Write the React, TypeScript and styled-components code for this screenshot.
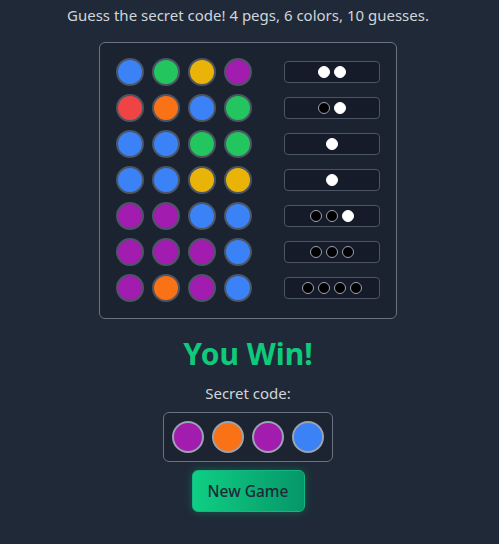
import React from "react";
import styled, { createGlobalStyle } from "styled-components";

const Global = createGlobalStyle`
  html, body { margin: 0; padding: 0; background: #1f2937; }
  body { font-family: "Segoe UI", "Noto Sans", "Open Sans", sans-serif; color: #d1d5db; }
  #root { min-height: 544px; }
`;

const Page = styled.div`
  display: flex;
  flex-direction: column;
  align-items: center;
  padding-right: 3px;
  background: #1f2937;
  min-height: 544px;
`;

const Intro = styled.p`
  margin: 4px 0 16px;
  font-size: 15px;
  line-height: 22px;
  color: #d1d5db;
`;

const Board = styled.div`
  display: flex;
  flex-direction: column;
  gap: 8px;
  padding: 15px 16px 16px;
  border: 1px solid #6b7280;
  border-radius: 6px;
  background: #1b2230;
`;

const Row = styled.div`
  display: flex;
  align-items: center;
  gap: 32px;
`;

const Pegs = styled.div<{ $gap: number }>`
  display: flex;
  gap: ${(p) => p.$gap}px;
`;

const Peg = styled.div<{ $color: string; $size: number; $ring: string }>`
  box-sizing: border-box;
  width: ${(p) => p.$size}px;
  height: ${(p) => p.$size}px;
  border-radius: 50%;
  background: ${(p) => p.$color};
  border: 2px solid ${(p) => p.$ring};
`;

const Feedback = styled.div`
  box-sizing: border-box;
  width: 96px;
  height: 22px;
  display: flex;
  align-items: center;
  justify-content: center;
  gap: 4px;
  border: 1px solid #4b5563;
  border-radius: 4px;
  background: #151b29;
`;

const Pin = styled.div<{ $kind: "b" | "w" }>`
  box-sizing: border-box;
  width: 12px;
  height: 12px;
  border-radius: 50%;
  background: ${(p) => (p.$kind === "w" ? "#ffffff" : "#000000")};
  border: 1px solid ${(p) => (p.$kind === "w" ? "#ffffff" : "#9ca3af")};
`;

const WinTitle = styled.h2`
  margin: 17px 0 0;
  font-size: 30px;
  line-height: 36px;
  font-weight: 700;
  color: #0fc97c;
`;

const SecretLabel = styled.p`
  margin: 10px 0 8px;
  font-size: 15px;
  line-height: 22px;
  color: #d1d5db;
`;

const SecretBox = styled.div`
  padding: 8px;
  border: 1px solid #6b7280;
  border-radius: 6px;
  background: #1c2331;
`;

const NewGame = styled.button`
  margin-top: 8px;
  width: 113px;
  height: 42px;
  border: 1px solid #10b981;
  border-radius: 6px;
  background: linear-gradient(90deg, #0fcf84, #069668);
  color: #1f2937;
  font-family: inherit;
  font-size: 15.5px;
  font-weight: 500;
  box-shadow: 0 0 10px rgba(16, 185, 129, 0.35);
  cursor: pointer;
`;

const C: Record<string, string> = {
  B: "#3b82f6",
  G: "#22c55e",
  Y: "#eab308",
  P: "#a21caf",
  R: "#ef4444",
  O: "#f97316",
};

const guesses: { code: string; fb: string }[] = [
  { code: "BGYP", fb: "ww" },
  { code: "ROBG", fb: "bw" },
  { code: "BBGG", fb: "w" },
  { code: "BBYY", fb: "w" },
  { code: "PPBB", fb: "bbw" },
  { code: "PPPB", fb: "bbb" },
  { code: "POPB", fb: "bbbb" },
];

export default function App() {
  return (
    <Page>
      <Global />
      <Intro>Guess the secret code! 4 pegs, 6 colors, 10 guesses.</Intro>
      <Board>
        {guesses.map((g, i) => (
          <Row key={i}>
            <Pegs $gap={8}>
              {g.code.split("").map((c, j) => (
                <Peg key={j} $color={C[c]} $size={28} $ring="#4b5563" />
              ))}
            </Pegs>
            <Feedback>
              {g.fb.split("").map((k, j) => (
                <Pin key={j} $kind={k as "b" | "w"} />
              ))}
            </Feedback>
          </Row>
        ))}
      </Board>
      <WinTitle>You Win!</WinTitle>
      <SecretLabel>Secret code:</SecretLabel>
      <SecretBox>
        <Pegs $gap={8}>
          {"POPB".split("").map((c, j) => (
            <Peg key={j} $color={C[c]} $size={32} $ring="#9ca3af" />
          ))}
        </Pegs>
      </SecretBox>
      <NewGame>New Game</NewGame>
    </Page>
  );
}
